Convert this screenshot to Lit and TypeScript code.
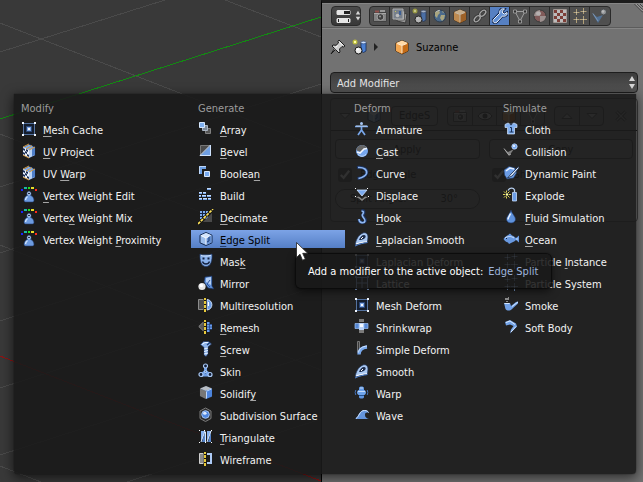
import { LitElement, html, css, svg, nothing } from "lit";
import type { SVGTemplateResult, TemplateResult } from "lit";
import { customElement, property } from "lit/decorators.js";
import { classMap } from "lit/directives/class-map.js";

const lattice = svg`
  <path d="M2.500 2.500h11v11h-11z" fill="#141d2c" stroke="#54729f"/>
  <path d="M5.500 5.500h5v5h-5z" fill="#7ea6e4" stroke="#2a4676"/>
  <path d="M7 7h2v2H7z" fill="#f4f9ff"/>
  <path d="M1 1h2v2H1zM13 1h2v2h-2zM1 13h2v2H1zM13 13h2v2h-2z" fill="#f0f6ff"/>`;

const uvCube = svg`
  <path d="M8 1l6 3v8l-6 3-6-3V4z" fill="#7fa9e6" stroke="#14213c"/>
  <path d="M2 4l6 3v8l-6-3z" fill="#eaf2ff"/>
  <path d="M2 5l2 1v2L2 7zM5 6l2 1v2L5 8zM4 8l2 1v2l-2-1zM2 9l2 1v2l-2-1zM6 11l2 1v2l-2-1z" fill="#1b2f55"/>
  <path d="M8 7l6-3v8l-6 3z" fill="#b9d2f5"/><path d="M11 5l3-1v8l-3 1z" fill="#4f7fc9"/>
  <path d="M2 4l6-3M8 7l6-3M2 12l6 3M5 6l6-3.500" stroke="#d79a3a" fill="none"/>`;

const weight = svg`
  <path d="M8 4.500a2.200 2.200 0 0 1 1.500 3.800c2 .8 3.500 2.900 3.500 4.900 0 1.300-1 1.800-2 1.800H5c-1 0-2-.5-2-1.800 0-2 1.500-4.100 3.500-4.900A2.200 2.200 0 0 1 8 4.500z" fill="#6d9be0" stroke="#1f3b70" stroke-width=".6"/>
  <circle cx="8" cy="6.500" r="1.400" fill="#16233f" stroke="#c2d9f8"/>
  <path d="M6.500 9.500c-1.200 1-2 2-2 3.500" stroke="#cfe2fc" fill="none" stroke-width="1.400"/>
  <path d="M0 2h2v2H0z" fill="#1b23ff"/><path d="M3 0h3v2H3z" fill="#19b9a8"/>
  <path d="M7 0h2v2H7z" fill="#20e020"/><path d="M10 0h3v2h-3z" fill="#e8dc28"/><path d="M14 2h2v2h-2z" fill="#ff2a1c"/>`;

const sparkle = (c: string) => svg`
  <g stroke=${c} stroke-width="1" fill="none">
    <path d="M4.500 1v6M1.500 4.500h6M11.500 0v6M8.500 3.500h6M4.500 9v6M1.500 11.500h6M11.500 8v8M8 11.500h7"/>
  </g>
  <path d="M4 4h1v1H4zM11 3h1v1h-1zM4 11h1v1H4zM11 11h1v1h-1z" fill="#fff"/>`;

const smoothIron = svg`
  <path d="M1 14c1-5 3-10 8-12 3-1 5 1 5 4l-.5 5c-4 .5-8 1.500-12.500 3z" fill="#a9c8f2" stroke="#1b2f55" stroke-width=".7"/>
  <path d="M5 9c1-3 3-5 5-5 2 0 2 2 1 3-1.500 1.500-3.500 2-6 2z" fill="#1b2a48"/>
  <path d="M7 8l2-2M2 13c4-1.500 8-2 11-2.300" stroke="#fff" fill="none"/>
  <path d="M1 15c4-2 9-3 12.500-3.500" stroke="#4f82cf" fill="none"/>`;

const objectCube = svg`
  <path d="M8 1.500l6 2.500v8l-6 3-6-3V4z" fill="#e08a30" stroke="#3a2208"/>
  <path d="M8 1.500l6 2.500-6 2.500L2 4z" fill="#ffd9a6"/>
  <path d="M2 4l6 2.500V15l-6-3z" fill="#f3a752"/>
  <path d="M8 6.500L14 4v8l-6 3z" fill="#c56c17"/>
  <path d="M8 7v7M3 4.500l5 2 5-2" stroke="#fff3e0" fill="none" stroke-width=".9"/>`;

const scene = svg`
  <path d="M9 4h5v8l-2.500 1.500L9 12z" fill="#4b7fd0" stroke="#152c58" stroke-width=".8"/>
  <ellipse cx="11.500" cy="3.500" rx="2.500" ry="1.300" fill="#cfe2ff" stroke="#1d3c74" stroke-width=".5"/>
  <circle cx="6.500" cy="11.500" r="3.500" fill="#e8e8e8" stroke="#111"/>
  <circle cx="5.500" cy="10.300" r="1.300" fill="#fff"/>
  <circle cx="3" cy="3" r="2.500" fill="#b9b93c"/><circle cx="3" cy="3" r="1.200" fill="#ffffa5"/>`;

const dash = svg`<path d="M5.500 1h3v14h-3z" fill="#17150c"/><path d="M6 1h2v2H6zM6 4h2v3H6zM6 8h2v3H6zM6 12h2v3H6z" fill="#e6c93c"/>`;

const icons: Record<string, SVGTemplateResult> = {
  lattice,
  uvCube,
  weight,
  array: svg`
    <path d="M7.500 7.500h5v5h-5z" fill="#555" stroke="#808080"/>
    <path d="M4.500 4.500h5v5h-5z" fill="#7a8796" stroke="#a9b4c2"/>
    <path d="M1.500 1.500h5v5h-5z" fill="#7fb0ef" stroke="#d5e6fc"/>`,
  bevel: svg`
    <path d="M2.500 2.500h10v10h-10z" fill="#4c4c4c" stroke="#777"/>
    <path d="M13 2v11H2z" fill="#6f9fe2"/><path d="M2 12.500L12.500 2v10.500z" stroke="#cfe2fc" fill="none"/>`,
  boolean: svg`
    <path d="M1 1h7v3H4v5H1z" fill="#6c9fe4"/><path d="M1.500 9V1.500H8" stroke="#bdd6f8" fill="none"/>
    <path d="M6.500 6.500h5v5h-5z" fill="#78aaf0" stroke="#d5e6fc"/>`,
  build: svg`
    <path d="M1 11h3v2H1zM5 11h4v2H5zM10 11h3v2h-3zM1 8h2v2H1zM4 8h4v2H4zM9 8h4v2H9zM1 5h3v2H1zM5 5h3v2H5zM9 1h4v2H9z" fill="#78a6e6"/>
    <path d="M1 11.500h3M5 11.500h4M10 11.500h3M1 8.500h2M4 8.500h4M9 8.500h4M1 5.500h3M5 5.500h3M9 1.500h4" stroke="#c6dcfa"/>`,
  decimate: svg`
    <path d="M2 2h8v8H2z" fill="#7fabeb"/><path d="M14 4v9H5z" fill="#4a4a4a"/>
    <path d="M4.500 2v9M7.500 2v6M2 4.500h9M2 7.500h7" stroke="#132443" fill="none"/>
    <path d="M0 15L15 0" stroke="#111" stroke-width="3"/>
    <path d="M0 15L15 0" stroke="#ffe35a" stroke-width="1.700" stroke-dasharray="3 1"/>`,
  edgeSplit: svg`
    <path d="M8 1.500l6 2.700v7.600L8 14.500l-6-2.700V4.200z" fill="#9dbdea" stroke="#13284f"/>
    <path d="M8 2l5.500 2.300L8 7 2.500 4.500z" fill="#d4e4fb"/><path d="M8 7l5.500-2.500v7L8 14z" fill="#6590d2"/>
    <path d="M3 4.500l5 2.500v6.500M8 7l3-1.500" stroke="#f6faff" fill="none"/><path d="M11 6v4M9 11l2-1" stroke="#1e3d75" fill="none"/>`,
  mask: svg`
    <path d="M2 1c2 1.200 3 .8 4.500.8S11 2.200 14 1c.5 6-1 12.500-6 12.500S1.500 7 2 1z" fill="#8ab2ec" stroke="#1d3765" stroke-width=".7"/>
    <path d="M3 2.200c2 1 3 .8 4.500.8S11 3 13 2.300" stroke="#d4e5fc" fill="none"/>
    <path d="M4.500 4.500h2v2h-2zM9.500 4.500h2v2h-2z" fill="#152444"/><path d="M4.500 8.500c1 3.300 6 3.300 7 0" stroke="#152444" fill="none" stroke-width="1.400"/>`,
  mirror: svg`
    <path d="M7 2l7-1v10l2 3-6-1-4-6z" fill="#5f8fd8" stroke="#182e58" stroke-width=".7"/>
    <path d="M8 3l5-1v8l-5-3z" fill="#b3cef4"/><path d="M12 5L9 9l3 3" stroke="#2b5299" fill="none"/>
    <circle cx="4" cy="11.500" r="3.600" fill="#e4e4e4"/><circle cx="3.300" cy="10.500" r="1.800" fill="#fff"/>`,
  multires: svg`
    <path d="M.5 2.500h5v10h-5z" fill="#4c4c4c" stroke="#8c8c8c"/>
    <path d="M9 2.500c6.500 .5 6.500 10 0 10.500z" fill="#6d9de4" stroke="#c6dcfa"/><path d="M10.500 5v4" stroke="#fff"/>${dash}`,
  remesh: svg`
    <path d="M5.500 3v9L.8 7.500z" fill="#5a5a5a" stroke="#8c8c8c"/>
    <path d="M9 3h3v2h2v5h-2v3H9z" fill="#6a9bea"/><path d="M9 5.500h5M9 8h5M9 10.500h5M11.500 3v10" stroke="#1e3e78" stroke-width=".7"/>${dash}`,
  screw: svg`
    <path d="M2.500 3.500l3-3h5l3 2.500-3.500 3v7L8 15.500 6 14V6.500z" fill="#8fb5ec" stroke="#1c325c" stroke-width=".7"/>
    <path d="M4 3.500l3-2h3M6 8l4-1M6 10.500l4-1M6 13l4-1" stroke="#e6f1ff" fill="none"/><path d="M9 4l3-2.500" stroke="#1c3a70" stroke-width="1.300"/>`,
  skin: svg`
    <path d="M7.500 3v5M7.500 8L3.500 12M7.500 8l4.500 4M4 12h8" stroke="#6e9ee6" stroke-width="3" fill="none"/>
    <g fill="#101d38" stroke="#a9c9f5" stroke-width="1.200"><circle cx="7.500" cy="3" r="2"/><circle cx="3" cy="11.500" r="2"/><circle cx="12" cy="11.500" r="2"/><circle cx="7.500" cy="8.500" r="1"/></g>`,
  solidify: svg`
    <path d="M8 1l6 2.500v8L8 14l-6-3V3.500z" fill="#5589dc" stroke="#222"/>
    <path d="M8 1l6 2.500L8 6 2 3.500z" fill="#b9bec5"/><path d="M2 3.500L8 6v8l-6-3z" fill="#777"/>
    <path d="M8 6l6-2.500v8L8 14z" fill="#4c84dd"/><path d="M8.500 6.500v7M9 6l4.500-2" stroke="#b9d5fb" fill="none"/>`,
  subsurf: svg`
    <path d="M7.500 1l5.500 3v7.500l-5.500 3-5.500-3V4z" fill="#2c2c2c" stroke="#7b7b7b"/>
    <circle cx="7.500" cy="7.500" r="3.800" fill="#4f87df" stroke="#a5c7f7"/><ellipse cx="6.800" cy="6.300" rx="1.800" ry="1.500" fill="#dbe9fd"/>`,
  triangulate: svg`
    <path d="M3 2h4L3 13zM9 2h4L9 13z" fill="#86b1ee"/><path d="M7 3v10H4zM13 3v10h-3z" fill="#5585cc"/>
    <path d="M7 2L3 13M13 2L9 13M7.500 3v10" stroke="#d6e7fd" fill="none"/>
    <path d="M1 1h1v1H1zM13 1h1v1h-1zM1 13h1v1H1zM13 13h1v1h-1zM6 1h1v1H6zM7 13h1v1H7z" fill="#fff"/>`,
  wireframe: svg`
    <path d="M1.500 2.500h4v10h-4z" fill="#8a8a8a" stroke="#d0d0d0"/>
    <path d="M9 3h4v9H9" fill="none" stroke="#adcaf5" stroke-width="2"/>${dash}`,
  armature: svg`
    <circle cx="7.500" cy="2.500" r="1.500" fill="#a9c9f5"/>
    <path d="M1 5.500h13M7.500 5v5M7.500 9L4 14M7.500 9l3.500 5" stroke="#79a7ea" stroke-width="1.700" fill="none"/><path d="M2 5h11" stroke="#cfe2fc" stroke-width=".8"/>`,
  cast: svg`
    <circle cx="8" cy="8" r="6" fill="#76a6ec"/><path d="M2.200 7A6 6 0 0 1 13 4.500L10 6 7 9 4 8z" fill="#666"/>
    <path d="M3 9l3 1 4-4 3-.5" stroke="#f2f7ff" stroke-width="1.600" fill="none"/><path d="M4 11c2 3 6 3 8 0" stroke="#b8d3f8" fill="none"/>`,
  curve: svg`<path d="M3 2.500c6-1 11 2 9.500 6C11.500 11 8 13 3.500 13.500" stroke="#1c3564" stroke-width="3" fill="none"/><path d="M4 2.500c6-.5 9.500 2.500 8.500 6-1 2.500-4 4-8 5" stroke="#8db5ef" stroke-width="1.600" fill="none"/>`,
  displace: svg`
    <path d="M3 3h10L8 9z" fill="#7aaaf0" stroke="#cfe2fc" stroke-width=".8"/><path d="M2 10l3-.5L8 12l3-2.500 3 .5-3 1.500-3 2.500-3-2.500z" fill="#858585"/>
    <path d="M1 1h1v1H1zM13 1h1v1h-1zM1 9h1v1H1zM14 9h1v1h-1z" fill="#fff"/>`,
  hook: svg`<path d="M7.500 1.500c3 0 3 2 1.500 4s2.500 3.500 2.500 6-6.500 3.500-6.500-1.500" stroke="#1c3564" stroke-width="3" fill="none"/><path d="M7.500 2c2.500 0 2.500 1.500 1 3.500s3 4 2.500 6.500-6 2.500-6-2" stroke="#90b7ef" stroke-width="1.600" fill="none"/>`,
  smooth: smoothIron,
  latticeGrid: svg`<path d="M2.500 2.500h11v11h-11zM8 2v12M2 8h12" stroke="#9dbdf0" fill="none"/><path d="M1 1h2v2H1zM13 1h2v2h-2zM1 13h2v2H1zM13 13h2v2h-2z" fill="#9dbdf0"/>`,
  shrinkwrap: svg`
    <path d="M5 0h5v3H5zM5 11h5v3H5z" fill="#7a7a7a"/><path d="M1 4.500h4v5H1zM10 4.500h4v5h-4z" fill="#5587d4" stroke="#9dc1f4" stroke-width=".7"/>
    <path d="M5 4h5v7H5z" fill="#b6d1f7"/><path d="M6 5h3v3H6z" fill="#f4f9ff"/>`,
  simpleDeform: svg`
    <path d="M3.500 .5h2v11h-2z" fill="#3a3a3a" stroke="#777"/>
    <path d="M5 13.500c0-5 3-7 8-7.500" stroke="#78a8ec" stroke-width="3.400" fill="none"/><path d="M4.500 11.500c.5-4 4-6 8.500-6.500" stroke="#d5e6fd" fill="none"/>`,
  warp: svg`
    <path d="M5 3c0-2 5-2 5 0v9c0 2-5 2-5 0z" fill="#5f95e0"/><ellipse cx="7.500" cy="7.500" rx="4.500" ry="3" fill="#6ea4ec"/>
    <path d="M4 6.500h7M6 3h3" stroke="#c5dcfb"/><path d="M5 10.500h5" stroke="#23508f"/><path d="M1.800 5Q.5 7.500 1.800 10M13.200 5q1.300 2.500 0 5" stroke="#4573b8" fill="none"/>`,
  wave: svg`<path d="M1 12c3-1 4-9 9.500-9 3 0 4 1.500 4.500 3-2-.8-4-.5-4 2 0 2 1.500 3.500 4 4z" fill="#6394dc"/><path d="M2 11.500C5 10 5.500 3.500 10.500 3.500c2.500 0 3.500 1 4 2" stroke="#d3e5fd" fill="none"/>`,
  cloth: svg`
    <path d="M2 3.500L5 2l3 1.500L11 2l3 1.500v3h-2.500V13h-7V6.500H2z" fill="#82b0f0" stroke="#d3e5fd" stroke-width=".7"/>
    <path d="M7 6.500h1.500V11M6.500 11h4" stroke="#193157" fill="none"/><path d="M6 2.500l2 2 2-2" fill="#23344f"/>`,
  collision: svg`
    <path d="M1 6l4 3 6-3-5 7z" fill="#7d7d7d"/><path d="M1 5.500L6 12l2-1" stroke="#a6a6a6" fill="none"/>
    <circle cx="11.500" cy="3.500" r="2.600" fill="#76a9f3" stroke="#b7d3fa"/><circle cx="11" cy="3" r="1" fill="#fff"/>`,
  dynamicPaint: svg`
    <path d="M1 5l5-3.500L12 3l1.500 5-3 5L4 14l-2.500-4z" fill="#6b9ce5" stroke="#1c355f" stroke-width=".6"/>
    <path d="M3 6l4-3 4 1" stroke="#e4effe" stroke-width="1.500" fill="none"/><path d="M15.500 1.500L8 9l-3.500 4L9 11l7-8z" fill="#dceafd" stroke="#172848" stroke-width=".8"/>`,
  explode: svg`
    <path d="M9.500 5.500h4V14h-4z" fill="#6c9ee8" stroke="#c3dafa" stroke-width=".8"/><path d="M11.500 5V3C10.500 .5 6.500 .5 5 3.500" stroke="#b8cfee" fill="none" stroke-width="1.300"/>
    <circle cx="4" cy="7.500" r="1.300" fill="#ffffa0"/><path d="M3.500 3.500v2M3.500 9.500v2M0 7.500h2M6 7.500h2M1 4.500L2.500 6M6.500 4.500L5 6M1 10.500L2.500 9M6.500 10.500L5 9" stroke="#e0d65a"/>`,
  fluid: svg`<path d="M8 1c1 4 4.500 6 4.500 9.200C12.500 12.500 10.500 14 8 14s-4.500-1.500-4.500-3.800C3.500 7 7 5 8 1z" fill="#5f92dc" stroke="#20396a" stroke-width=".6"/><path d="M7.500 4.500C7 6.500 5 8 5 10.500" stroke="#e5f0ff" stroke-width="1.500" fill="none"/>`,
  ocean: svg`
    <path d="M.5 8C3 4.500 5 4.500 7 2.500l2 2c2 .5 3 2 4 2.500L16 4.500v7L13 9c-2 2-4 2.500-5 3l-2 1-1-1.500C3 11 1.500 10 .5 8z" fill="#6999e0"/>
    <path d="M2 7c3-2 6-2 9 0M13 8h2" stroke="#cfe2fc" fill="none"/><path d="M3 7h1v1H3z" fill="#132340"/>`,
  particles: sparkle("#7d9cc9"),
  smoke: svg`
    <path d="M2 1h3v2H2zM5 0h1v3H5zM3 4h2v1H3z" fill="#8b8b8b"/>
    <path d="M1 6h6l1 3 5-4 2-.5v2L9 12c-2 2-5 2-6.500 0z" fill="#71a1e7"/><path d="M1.500 6.500h5M9 9.500L15 5" stroke="#d3e5fd"/>`,
  softBody: svg`<path d="M2 3l5-2 6 3.500 1 3-7 7 1-4 2.500-3.500L7 5.500 3 6.500z" fill="#73a4ea"/><path d="M3 3.500l4-1.500L12 5.500M13 7.500l-5 5.500" stroke="#dceafd" fill="none"/>`,

  editor: svg`
    <rect x=".5" y="2" width="14" height="5" rx="1.500" fill="#e5e5e5"/><path d="M8 3h6v3H8z" fill="#222"/>
    <rect x=".5" y="10" width="14" height="5" rx="1.500" fill="#e5e5e5"/><path d="M2 11h1v3H2zM12 11h1v3h-1z" fill="#222"/>`,
  render: svg`
    <path d="M1.500 4.500h13v9h-13z" fill="#9b9b9b" stroke="#3b3b3b"/><path d="M3 2.500h4v2H3z" fill="#b0504a"/><path d="M8 2h5v2H8z" fill="#bbb"/>
    <path d="M2 5.500h12" stroke="#d5d5d5"/><circle cx="8.500" cy="9" r="3.400" fill="#3a3a3a" stroke="#ccc"/><circle cx="8" cy="8.500" r="1" fill="#bbb"/>`,
  layers: svg`
    <path d="M6 4l9 2-1.500 9L5 13z" fill="#bbb" stroke="#333"/><path d="M3.500 3h9v9h-9z" fill="#ddd" stroke="#444" stroke-width=".7"/><path d="M1 1h10v10H1z" fill="#8c99a9" stroke="#ddd"/>
    <path d="M7 3h2v4H7z" fill="#3769b7"/><circle cx="5.500" cy="7.500" r="1.800" fill="#f2f2f2"/><path d="M3 3h1v1H3z" fill="#ff6"/>`,
  scene,
  world: svg`<circle cx="8" cy="8" r="6" fill="#4a78a8" stroke="#213750"/><path d="M3 4l4-1.500L8 5 6 7 5 10 3 8zM9 7l4 0-1 4-2 2-2-3zM10 3l2 1-1 1z" fill="#d4ce98"/><path d="M4 4c1-1 3-2 4-1.500" stroke="#f0f6f6" fill="none"/>`,
  object: objectCube,
  link: svg`<g fill="none" stroke="#333" stroke-width="3.200"><ellipse cx="10.800" cy="5.200" rx="3.600" ry="2.200" transform="rotate(-45 10.800 5.200)"/><ellipse cx="5.200" cy="10.800" rx="3.600" ry="2.200" transform="rotate(-45 5.200 10.800)"/></g><g fill="none" stroke="#d0d0d0" stroke-width="1.300"><ellipse cx="10.800" cy="5.200" rx="3.600" ry="2.200" transform="rotate(-45 10.800 5.200)"/><ellipse cx="5.200" cy="10.800" rx="3.600" ry="2.200" transform="rotate(-45 5.200 10.800)"/></g>`,
  wrench: svg`<path d="M15 4.500l-2.500 1.500-2-1-.3-2L12.500 1C10 0 7 2 7.800 5.200L2 11c-2.500 2 .5 5.500 3 3l5.500-6C13 9 16 7 15 4.500z" fill="#7ca5e2" stroke="#0e2148" stroke-width="2.400"/><path d="M15 4.500l-2.500 1.500-2-1-.3-2L12.500 1C10 0 7 2 7.800 5.200L2 11c-2.500 2 .5 5.500 3 3l5.500-6C13 9 16 7 15 4.500z" fill="#6290d4" stroke="#eef5ff" stroke-width="1"/>`,
  mesh: svg`<path d="M3 3.500h10L8 13z" fill="#5c5c5c" stroke="#c4c4c4"/><path d="M1.500 2h3v3h-3zM11.500 2h3v3h-3zM6.500 12h3v3h-3z" fill="#222" stroke="#d0d0d0" stroke-width=".8"/>`,
  material: svg`<circle cx="8" cy="8" r="6" fill="#9a6260" stroke="#333"/><path d="M8 2a6 6 0 0 0-6 6h6zM8 8h6a6 6 0 0 1-6 6z" fill="#c2b0ae"/><ellipse cx="6.500" cy="5.500" rx="2.500" ry="2" fill="#e6dedd"/>`,
  texture: svg`<path d="M2 2h12v12H2z" fill="#f0f0f0"/><path d="M2 2h3v3H2zM8 2h3v3H8zM5 5h3v3H5zM11 5h3v3h-3zM2 8h3v3H2zM8 8h3v3H8zM5 11h3v3H5zM11 11h3v3h-3z" fill="#94392f"/><path d="M1.500 1.500h13v13h-13z" fill="none" stroke="#c9bbb5"/>`,
  sparks: sparkle("#e0c88c"),
  physics: svg`<path d="M0 5l5 4 6-2-5 8z" fill="#5380b4"/><path d="M1 5.500L6 13" stroke="#93b8e4" fill="none"/><circle cx="11.500" cy="4" r="3" fill="#b4b9bd" stroke="#45494d"/><circle cx="11" cy="3.500" r="1.200" fill="#eee"/>`,
  pin: svg`<path d="M9 1l6 6-1.500 1-1.500-.5L9.500 10l.5 3-1 1-3.500-3.500L1 15l3.500-5.500L2 7l1-1 3 .3L8.500 4 8 2.500z" fill="#cfcfcf" stroke="#1c1c1c"/><path d="M9.500 3l3 3M7.500 6.500l-1.500 2" stroke="#fff" fill="none"/>`,
  up: svg`<path d="M3 10.500h10L8 5.500z" fill="#aaa" stroke="#333"/>`,
  down: svg`<path d="M3 5.500h10l-5 5z" fill="#bbb" stroke="#333"/>`,
  close: svg`<path d="M3.500 3.500l9 9M12.500 3.500l-9 9" stroke="#222" stroke-width="3"/><path d="M3.500 3.500l9 9M12.500 3.500l-9 9" stroke="#999" stroke-width="1.500"/>`,
  eye: svg`<path d="M1 8c3-5 11-5 14 0-3 5-11 5-14 0z" fill="#ccc" stroke="#222"/><circle cx="8" cy="8" r="2.500" fill="#222"/>`,
  updown: svg`<path d="M8 1l3 5H5zM8 14l3-5H5z" fill="#d6d6d6"/>`,
  grip: svg`<path d="M1 0l15 15M6 0l10 10M11 0l5 5" stroke="#2c2c2c" stroke-width="1.500"/><path d="M3 0l13 13M8 0l8 8M13 0l3 3" stroke="#b4b4b4" stroke-width="1.500"/>`,
};

const icon = (name: string): TemplateResult =>
  html`<svg class="icon" viewBox="0 0 16 16" aria-hidden="true">${icons[name]}</svg>`;

interface Entry { icon: string; label: string; active?: boolean }
interface Group { title: string; entries: Entry[] }

const group = (title: string, rows: [string, string][]): Group => ({
  title,
  entries: rows.map(([name, label]) => ({ icon: name, label, active: name === "edgeSplit" })),
});

/* An underscore marks the shortcut letter that follows it. */
const groups: Group[] = [
  group("Modify", [
    ["lattice", "_Mesh Cache"], ["uvCube", "_UV Project"], ["uvCube", "UV _Warp"],
    ["weight", "_Vertex Weight Edit"], ["weight", "Verte_x Weight Mix"], ["weight", "Vertex Weight _Proximity"],
  ]),
  group("Generate", [
    ["array", "_Array"], ["bevel", "_Bevel"], ["boolean", "Boolea_n"], ["build", "Build"],
    ["decimate", "_Decimate"], ["edgeSplit", "_Edge Split"], ["mask", "Mas_k"], ["mirror", "Mirror"],
    ["multires", "Multiresolution"], ["remesh", "_Remesh"], ["screw", "_Screw"], ["skin", "Skin"],
    ["solidify", "Solidif_y"], ["subsurf", "Subdivision Surface"], ["triangulate", "_Triangulate"],
    ["wireframe", "Wireframe"],
  ]),
  group("Deform", [
    ["armature", "Armature"], ["cast", "_Cast"], ["curve", "Curve"], ["displace", "Displace"],
    ["hook", "_Hook"], ["smooth", "_Laplacian Smooth"], ["lattice", "Laplacian Deform"],
    ["latticeGrid", "Lattice"], ["lattice", "Mesh Deform"], ["shrinkwrap", "Shrinkwrap"],
    ["simpleDeform", "Simple Deform"], ["smooth", "Smooth"], ["warp", "Warp"], ["wave", "Wave"],
  ]),
  group("Simulate", [
    ["cloth", "Cloth"], ["collision", "Collision"], ["dynamicPaint", "Dynamic Paint"],
    ["explode", "Explode"], ["fluid", "_Fluid Simulation"], ["ocean", "_Ocean"],
    ["particles", "Particle _Instance"], ["particles", "Particle System"], ["smoke", "Smoke"],
    ["softBody", "Soft Body"],
  ]),
];

const tabs = [
  ["render", "Render"], ["layers", "Render Layers"], ["scene", "Scene"], ["world", "World"],
  ["object", "Object"], ["link", "Constraints"], ["wrench", "Modifiers"], ["mesh", "Data"],
  ["material", "Material"], ["texture", "Texture"], ["sparks", "Particles"], ["physics", "Physics"],
];

const shared = css`
  * { box-sizing: border-box; }
  button, select, input { font: inherit; color: inherit; margin: 0; padding: 0; border: 0; background: none; }
  .icon { width: 16px; height: 16px; flex: none; display: block; }
`;

@customElement("view-port")
class ViewPort extends LitElement {
  static styles = css`
    :host { display: block; background: #393939; overflow: hidden; }
    .floor { display: block; width: 321px; height: 482px; }
    .line { stroke: #4a4a4a; fill: none; }
    .y { stroke: #138a13; fill: none; }
    .x { stroke: #8c1414; fill: none; }
  `;
  render() {
    return html`<svg class="floor" viewBox="0 0 321 482" shape-rendering="crispEdges" aria-hidden="true">
      <path class="line" d="M0 23L321 148M225 0L321 37M0 134L321 259M0 245L321 370M0 466L41 482
        M0 52L165 0M0 187L321 84M0 253L321 150M0 321L321 217M0 388L321 285M0 455L321 352M127 482L321 419"/>
      <path class="y" d="M0 119L321 17"/>
      <path class="x" d="M0 356L321 481"/>
    </svg>`;
  }
}

@customElement("properties-panel")
class PropertiesPanel extends LitElement {
  static styles = [shared, css`
    :host { display: flex; flex-direction: column; background: #727272; border-left: 1px solid #000; border-top: 3px solid #1c1c1c; overflow: hidden; }
    .bar { position: relative; display: flex; gap: 8px; height: 25px; padding: 2px 9px; border-top: 1px solid #858585; border-bottom: 1px solid #5c5c5c; flex: none; }
    .grip { position: absolute; top: 0; right: 0; }
    .grip .icon { width: 9px; height: 9px; }
    .editor { display: flex; align-items: center; width: 30px; height: 20px; padding-left: 4px; border: 1px solid #2a2a2a; border-radius: 4px; background: linear-gradient(#4a4a4a, #383838); }
    .editor .icon + .icon { width: 12px; }
    .tabs { display: flex; height: 20px; border: 1px solid #2a2a2a; border-radius: 4px; overflow: hidden; background: #505050; }
    .tab { display: flex; align-items: center; justify-content: center; width: 20px; border-right: 1px solid #2a2a2a; }
    .tab:last-child { border-right: 0; }
    .tab.on { background: #5680c2; }
    .tab:not(.on) .icon { opacity: 0.68; }
    .body { padding: 0 5px 0 8px; border-top: 1px solid #858585; display: flex; flex-direction: column; }
    .path { display: flex; align-items: center; height: 36px; margin-bottom: 7px; gap: 6px; color: #000; }
    .path span { padding-top: 2px; }
    .arrow { width: 0; height: 8px; border: 4px solid transparent; border-left-color: #222; margin-right: 6px; }
    .path .pin { margin: 0; }
    .pick { position: relative; display: block; height: 21px; }
    .pick select { width: 100%; height: 21px; appearance: none; padding: 2px 0 0 6px; border: 1px solid #1e1e1e; border-radius: 4px; background: linear-gradient(#3c3c3c, #555); color: #e6e6e6; }
    .pick .icon { position: absolute; right: -2px; top: 3px; }
    .card { margin-top: 5px; border: 1px solid #3d3d3d; border-radius: 4px; background: #777; color: #000; }
    .head { display: flex; align-items: center; gap: 9px; height: 32px; padding: 2px 6px 0; border-bottom: 1px solid #222; }
    .head .icon + .icon { margin-left: 4px; }
    .name { flex: none; width: 47px; height: 20px; padding: 0 7px; border: 1px solid #333; border-radius: 4px; background: #808080; }
    .set { flex: none; display: flex; height: 20px; border: 1px solid #333; border-radius: 4px; }
    .set button { display: flex; align-items: center; justify-content: center; width: 24px; }
    .set button + button { border-left: 1px solid #333; }
    .grow { flex: 1; }
    .grid { display: grid; grid-template-columns: 1fr 1fr; gap: 5px 9px; padding: 8px 4px 12px; }
    .push { height: 20px; padding-top: 2px; border: 1px solid #333; border-radius: 4px; background: #808080; }
    .tick { display: flex; align-items: center; gap: 8px; height: 20px; padding: 2px 0 0 3px; }
    .tick input { width: 14px; height: 14px; accent-color: #444; }
    .slide { display: flex; align-items: center; justify-content: space-between; height: 20px; padding: 0 14px; border: 1px solid #333; border-radius: 10px; background: #888; }
    .slide input { width: 24px; }
  `];
  render() {
    return html`
      <div class="bar">
        <button class="editor" aria-label="Editor type">${icon("editor")}${icon("updown")}</button>
        <div class="tabs">${tabs.map(([name, label]) => html`
          <button class=${classMap({ tab: true, on: name === "wrench" })} aria-label=${label}>${icon(name)}</button>`)}
        </div>
        <div class="grip">${icon("grip")}</div>
      </div>
      <div class="body">
        <div class="path">
          <button class="pin" aria-label="Pin">${icon("pin")}</button>${icon("scene")}<i class="arrow"></i>
          ${icon("object")}<span>Suzanne</span>
        </div>
        <label class="pick"><select aria-label="Add Modifier"><option>Add Modifier</option></select>${icon("updown")}</label>
        <div class="card">
          <div class="head">
            ${icon("down")}${icon("edgeSplit")}<input class="name" aria-label="Modifier name" value="EdgeS">
            <div class="set">
              ${[["render", "Render"], ["eye", "Display"], ["object", "Edit mode"], ["mesh", "Cage"]].map(([n, l]) => html`<button aria-label=${l}>${icon(n)}</button>`)}
            </div>
            <div class="set">
              <button aria-label="Move up">${icon("up")}</button><button aria-label="Move down">${icon("down")}</button>
            </div>
            <button aria-label="Remove">${icon("close")}</button>
          </div>
          <div class="grid">
            <button class="push">Apply</button><button class="push">Copy</button>
            <label class="tick"><input type="checkbox" checked>Edge Angle</label>
            <label class="tick"><input type="checkbox" checked>Sharp Edges</label>
            <label class="slide">Split Angle:<input value="30°"></label>
          </div>
        </div>
      </div>`;
  }
}

@customElement("modifier-menu")
class ModifierMenu extends LitElement {
  @property({ attribute: false }) groups: Group[] = [];
  static styles = [shared, css`
    :host { display: grid; grid-template-columns: 177fr 156fr 149fr 140fr; padding: 4px 0 6px; background: rgba(25, 25, 25, 0.9); border-radius: 0 0 4px 4px; box-shadow: 0 3px 12px 1px rgba(0, 0, 0, 0.6), 0 0 1px #000; color: #f2f2f2; }
    .column { display: flex; flex-direction: column; gap: 4px; padding-right: 2px; min-width: 0; }
    .title { height: 18px; line-height: 14px; padding: 4px 0 0 7px; color: #9b9b9b; }
    .item { display: flex; align-items: center; gap: 6px; height: 18px; padding-left: 7px; white-space: nowrap; text-align: left; }
    .text { line-height: 14px; padding-top: 4px; }
    .item.on { background: linear-gradient(#7ca3e6, #557fc6); color: #000; }
    .key { text-decoration: underline 1px #a5a5a5; text-underline-offset: 2px; text-decoration-skip-ink: none; }
    .on .key { text-decoration-color: #24406f; }
  `];
  label(text: string) {
    const at = text.indexOf("_");
    if (at < 0) return html`<span class="text">${text}</span>`;
    return html`<span class="text">${text.slice(0, at)}<span class="key">${text[at + 1]}</span>${text.slice(at + 2) || nothing}</span>`;
  }
  render() {
    return this.groups.map((g) => html`
      <div class="column" role="group" aria-label=${g.title}>
        <div class="title">${g.title}</div>
        ${g.entries.map((e) => html`
          <button role="menuitem" class=${classMap({ item: true, on: !!e.active })}>${icon(e.icon)}${this.label(e.label)}</button>`)}
      </div>`);
  }
}

@customElement("app-root")
class AppRoot extends LitElement {
  static styles = [shared, css`
    :host { display: block; position: relative; overflow: hidden; min-height: 100vh; font: 11px/16px "DejaVu Sans Condensed", "DejaVu Sans", sans-serif; }
    .screen { display: grid; grid-template-columns: 321fr 322fr; min-height: 100vh; }
    .menu { position: absolute; top: 94px; left: 14px; right: 7px; }
    .tip { position: absolute; top: 254px; left: 296px; display: flex; gap: 5px; padding: 10px 13px 8px 12px; border-radius: 5px; background: rgba(25, 25, 25, 0.88); box-shadow: 0 0 1px 1px #0c0c0c, 0 3px 8px rgba(0, 0, 0, 0.6); color: #fff; white-space: nowrap; }
    .value { color: #9db4dc; }
    .cursor { position: absolute; top: 241px; left: 295px; width: 14px; height: 21px; }
  `];
  render() {
    return html`
      <div class="screen"><view-port></view-port><properties-panel></properties-panel></div>
      <modifier-menu class="menu" role="menu" .groups=${groups}></modifier-menu>
      <div class="tip" role="tooltip"><span>Add a modifier to the active object:</span><span class="value">Edge Split</span></div>
      <svg class="cursor" viewBox="0 0 14 21" aria-hidden="true">
        <path d="M1.500 1.500v15l3.500-3.300 2.500 6 2.800-1.200-2.600-5.700h5z" fill="#fff" stroke="#222" stroke-width=".8"/>
      </svg>`;
  }
}
